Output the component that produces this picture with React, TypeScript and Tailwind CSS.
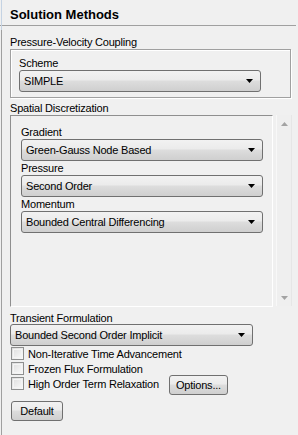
import React from "react";

const font = { fontFamily: '"Liberation Sans", Arial, sans-serif' };

function Arrow() {
  return (
    <svg width="7" height="4" viewBox="0 0 7 4" className="shrink-0">
      <path d="M0 0H7L3.5 4Z" fill="#000" />
    </svg>
  );
}

function Select({ value, w }: { value: string; w: string }) {
  return (
    <div
      className={`${w} h-[22px] flex items-center justify-between pl-[4px] pr-[7px] rounded-[3px] border border-[#707070] bg-[linear-gradient(to_bottom,#f2f2f2_0%,#ebebeb_45%,#dddddd_50%,#cfcfcf_100%)] text-[11px] tracking-[-0.2px] text-black`}
    >
      <span className="leading-[13px]">{value}</span>
      <Arrow />
    </div>
  );
}

function Label({ children, cls = "" }: { children: React.ReactNode; cls?: string }) {
  return (
    <div className={`text-[11px] tracking-[-0.2px] leading-[14px] h-[14px] text-black ${cls}`}>{children}</div>
  );
}

function Check({ label }: { label: string }) {
  return (
    <div className="flex items-center h-[15px] gap-[4px]">
      <div className="w-[13px] h-[13px] border border-[#8e8f8f] bg-[linear-gradient(135deg,#dcdcdc,#fbfbfb)] p-[1px]">
        <div className="w-full h-full border border-[#f4f4f4]" />
      </div>
      <span className="text-[11px] tracking-[-0.2px] leading-[14px]">{label}</span>
    </div>
  );
}

function Btn({ label, w }: { label: string; w: string }) {
  return (
    <div
      className={`${w} h-[20px] flex items-center justify-center rounded-[3px] border border-[#707070] bg-[linear-gradient(to_bottom,#f2f2f2_0%,#ebebeb_45%,#dddddd_50%,#cfcfcf_100%)] text-[11px] tracking-[-0.2px] leading-[14px]`}
    >
      {label}
    </div>
  );
}

export default function App() {
  return (
    <div style={font} className="w-[298px] h-[435px] bg-[#f0f0f0] relative overflow-hidden text-black">
      <div className="absolute left-[1px] top-0 w-[1px] h-[30px] bg-[#c5d3e3]" />
      <div className="absolute left-[1px] top-[30px] w-[1px] h-[405px] bg-[#a0a0a0]" />
      <div className="flex flex-col">
        <div className="h-[26px] w-[296px] border-b border-[#a0a0a0] pl-[10px] pt-[7px]">
          <div className="text-[13px] font-bold leading-[16px]">Solution Methods</div>
        </div>
        <Label cls="mt-[9px] pl-[10px]">Pressure-Velocity Coupling</Label>
        <div className="ml-[10px] w-[281px] h-[49px] border border-[#a0a0a0] shadow-[inset_1px_1px_0_#fff,1px_1px_0_#fff] pl-[8px] pt-[6px]">
          <Label>Scheme</Label>
          <Select value="SIMPLE" w="w-[242px]" />
        </div>
        <Label cls="mt-[3px] pl-[10px]">Spatial Discretization</Label>
        <div className="flex ml-[10px] h-[192px]">
          <div className="w-[263px] h-full border-t border-l border-[#8f8f8f] border-r border-b border-r-white border-b-white pl-[10px] pt-[9px]">
            <Label>Gradient</Label>
            <Select value="Green-Gauss Node Based" w="w-[242px]" />
            <Label>Pressure</Label>
            <Select value="Second Order" w="w-[242px]" />
            <Label>Momentum</Label>
            <Select value="Bounded Central Differencing" w="w-[242px]" />
          </div>
          <div className="ml-[3px] w-[16px] h-[191px] bg-[#efefef] border-l border-[#f8f8f8] border-r border-r-[#e6e6e6] flex flex-col items-center justify-between pt-[7px] pb-[6px]">
            <svg width="7" height="4" viewBox="0 0 7 4">
              <path d="M0 4H7L3.5 0Z" fill="#a3a3a3" />
            </svg>
            <svg width="7" height="4" viewBox="0 0 7 4">
              <path d="M0 0H7L3.5 4Z" fill="#a3a3a3" />
            </svg>
          </div>
        </div>
        <Label cls="mt-[4px] pl-[10px]">Transient Formulation</Label>
        <div className="ml-[10px] mt-[-1px]">
          <Select value="Bounded Second Order Implicit" w="w-[243px]" />
        </div>
        <div className="ml-[11px] flex flex-col">
          <Check label="Non-Iterative Time Advancement" />
          <Check label="Frozen Flux Formulation" />
          <div className="flex items-start">
            <Check label="High Order Term Relaxation" />
            <div className="ml-[10px] mt-[-1px]">
              <Btn label="Options..." w="w-[59px]" />
            </div>
          </div>
        </div>
        <div className="ml-[11px] mt-[6px]">
          <Btn label="Default" w="w-[52px]" />
        </div>
      </div>
    </div>
  );
}
